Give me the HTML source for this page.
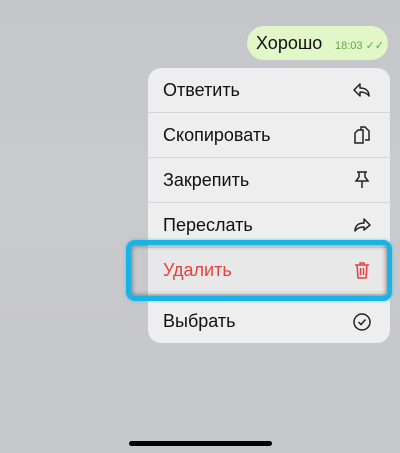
<!DOCTYPE html><html><head><meta charset="utf-8"><style>
body{margin:0;width:400px;height:453px;overflow:hidden;background:linear-gradient(180deg,#c4c6ca 0%,#c9cacd 40%,#c6c7ca 100%);font-family:"Liberation Sans",sans-serif;position:relative}
.bub{position:absolute;left:247px;top:26px;width:141px;height:34px;background:#e2f7c8;border-radius:17px}
.bub .t{position:absolute;left:9px;top:7px;font-size:18px;color:#111}
.bub .tm{position:absolute;left:88px;top:13px;font-size:11px;color:#5fa54a}
.menu{position:absolute;left:148px;top:68px;width:242px;height:275px;background:#eeeeee;border-radius:13px;overflow:hidden}
.row{position:absolute;left:0;width:242px;height:45px;border-bottom:1px solid #d6d6d6;box-sizing:border-box}
.row span{position:absolute;left:15px;top:12px;font-size:18px;color:#111}
.row svg{position:absolute;left:204px;top:12px}
.gap{position:absolute;left:0;top:226px;width:242px;height:7px;background:#dcdcdc}
.hl{position:absolute;left:126px;top:240px;width:266px;height:61px;box-sizing:border-box;border:5px solid #19b3e6;border-radius:9px;box-shadow:inset 0 0 5px 1px rgba(0,0,0,.4),0 0 3px rgba(25,179,230,.6)}
.home{position:absolute;left:129px;top:441px;width:143px;height:5px;background:#000;border-radius:3px}
</style></head><body>
<div class="bub"><div class="t">Хорошо</div><div class="tm">18:03 ✓✓</div></div>
<div class="menu">
<div class="row" style="top:0"><span>Ответить</span><svg width="20" height="20" viewBox="0 0 20 20" fill="none" stroke="#222" stroke-width="1.5" stroke-linejoin="round"><path d="M8 4L2 10l6 6v-4c4 0 7 1 9 4 0-5-3-8-9-8z"/></svg></div>
<div class="row" style="top:45px"><span>Скопировать</span><svg width="20" height="20" viewBox="0 0 20 20" fill="none" stroke="#222" stroke-width="1.5"><path d="M3 8l3-3h5v13H3z"/><path d="M9 5V2h4l4 4v9h-4"/></svg></div>
<div class="row" style="top:90px"><span>Закрепить</span><svg width="20" height="20" viewBox="0 0 20 20" fill="none" stroke="#222" stroke-width="1.5"><path d="M5 2h10M7 2v5l-3 4h12l-3-4V2M10 11v7"/></svg></div>
<div class="row" style="top:135px"><span>Переслать</span><svg width="20" height="20" viewBox="0 0 20 20" fill="none" stroke="#222" stroke-width="1.5" stroke-linejoin="round"><path d="M12 4l6 6-6 5v-3c-4 0-7 1-9 4 0-5 3-8 9-8z"/></svg></div>
<div class="row" style="top:180px;border:none;background:#e8e8e8"><span style="color:#e5423c">Удалить</span><svg width="20" height="20" viewBox="0 0 20 20" fill="none" stroke="#e5423c" stroke-width="1.5"><path d="M3 5h14M8 5V3h4v2M5 5l1 13h8l1-13M8.5 8v7M11.5 8v7"/></svg></div>
<div class="gap"></div>
<div class="row" style="top:233px;height:42px;border:none"><span style="top:10px">Выбрать</span><svg width="20" height="20" viewBox="0 0 20 20" fill="none" stroke="#222" stroke-width="1.5" style="top:11px"><circle cx="10" cy="10" r="8"/><path d="M6.5 10l2.5 2.5 4.5-5"/></svg></div>
</div>
<div class="hl"></div>
<div class="home"></div>
</body></html>
